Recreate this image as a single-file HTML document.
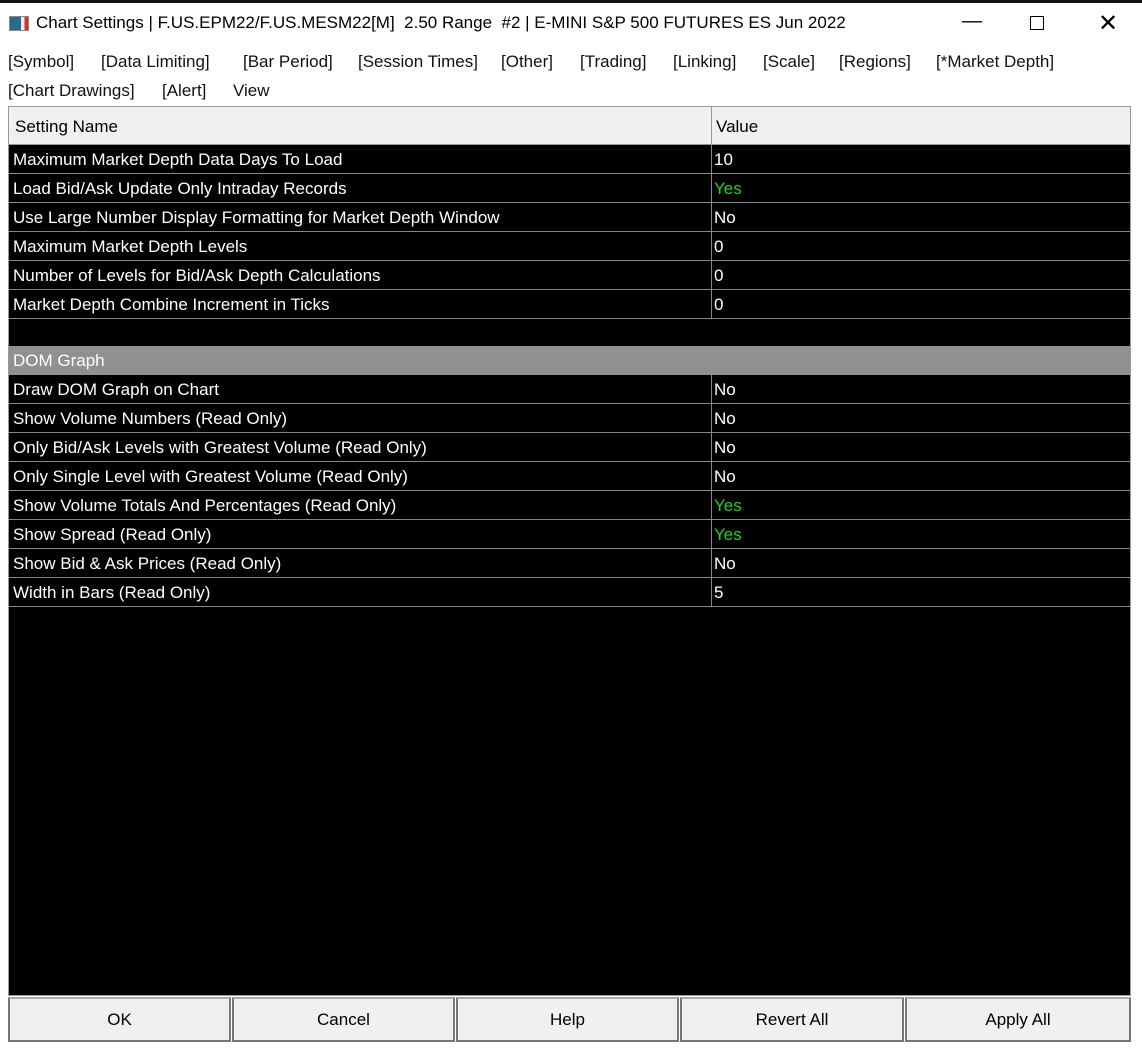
<!DOCTYPE html>
<html><head><meta charset="utf-8"><style>
*{margin:0;padding:0;box-sizing:border-box}
body{width:1142px;height:1048px;background:#fff;font-family:"Liberation Sans",sans-serif;position:relative;overflow:hidden;color:#000}
.top{position:absolute;left:0;top:0;width:1142px;height:3px;background:#111}
.title{position:absolute;left:36px;top:13px;font-size:17px}
.ico{position:absolute;left:9px;top:16px;width:20px;height:15px;border:1px solid #888;background:linear-gradient(90deg,#2a6a8a 0 60%,#eee 60% 80%,#c33 80%)}
.ctl{position:absolute;top:10px;font-size:20px}
.m{position:absolute;font-size:17px;color:#111;white-space:pre}
.tbl{position:absolute;left:8px;top:106px;width:1123px;height:890px;background:#000;border:1px solid #999}
.hdr{position:absolute;left:0;top:0;width:100%;height:38px;background:#f0f0f0;border-bottom:1px solid #999;font-size:17px}
.hdr span{position:absolute;top:10px}
.row{position:absolute;left:0;width:100%;height:29px;border-bottom:1px solid #888;color:#fff;font-size:17px}
.row span{position:absolute;top:5px;left:4px;white-space:nowrap}
.row span.v{left:705px}
.row:before{content:"";position:absolute;left:702px;top:0;height:29px;border-left:1px solid #888}
.g{color:#1ed41e}
.sec{position:absolute;left:0;width:100%;height:29px;background:#909090;color:#fff;font-size:17px}
.sec span{position:absolute;left:4px;top:5px}
.btn{position:absolute;top:997px;height:45px;background:#f0f0f0;border:2px solid #777;border-top-color:#aaa;font-size:17px;text-align:center;line-height:42px}
</style></head><body>
<div class="top"></div>
<div class="ico"></div>
<div class="title">Chart Settings | F.US.EPM22/F.US.MESM22[M]&nbsp; 2.50 Range&nbsp; #2 | E-MINI S&amp;P 500 FUTURES ES Jun 2022</div>
<div class="ctl" style="left:962px;">&#8212;</div>
<div style="position:absolute;left:1030px;top:16px;width:14px;height:14px;border:1.5px solid #000"></div>
<div class="ctl" style="left:1098px;top:9px;font-size:24px">&#10005;</div>
<div class="m" style="top:52px;left:8px">[Symbol]</div>
<div class="m" style="top:52px;left:101px">[Data Limiting]</div>
<div class="m" style="top:52px;left:243px">[Bar Period]</div>
<div class="m" style="top:52px;left:358px">[Session Times]</div>
<div class="m" style="top:52px;left:501px">[Other]</div>
<div class="m" style="top:52px;left:580px">[Trading]</div>
<div class="m" style="top:52px;left:673px">[Linking]</div>
<div class="m" style="top:52px;left:763px">[Scale]</div>
<div class="m" style="top:52px;left:839px">[Regions]</div>
<div class="m" style="top:52px;left:936px">[*Market Depth]</div>
<div class="m" style="top:81px;left:8px">[Chart Drawings]</div>
<div class="m" style="top:81px;left:162px">[Alert]</div>
<div class="m" style="top:81px;left:233px">View</div>
<div class="tbl">
<div class="hdr"><span style="left:6px">Setting Name</span><span style="left:707px">Value</span><div style="position:absolute;left:702px;top:0;height:38px;border-left:1px solid #999"></div></div>
<div class="row" style="top:38px"><span>Maximum Market Depth Data Days To Load</span><span class="v">10</span></div>
<div class="row" style="top:67px"><span>Load Bid/Ask Update Only Intraday Records</span><span class="v g">Yes</span></div>
<div class="row" style="top:96px"><span>Use Large Number Display Formatting for Market Depth Window</span><span class="v">No</span></div>
<div class="row" style="top:125px"><span>Maximum Market Depth Levels</span><span class="v">0</span></div>
<div class="row" style="top:154px"><span>Number of Levels for Bid/Ask Depth Calculations</span><span class="v">0</span></div>
<div class="row" style="top:183px"><span>Market Depth Combine Increment in Ticks</span><span class="v">0</span></div>
<div class="sec" style="top:239px"><span>DOM Graph</span></div>
<div class="row" style="top:268px"><span>Draw DOM Graph on Chart</span><span class="v">No</span></div>
<div class="row" style="top:297px"><span>Show Volume Numbers (Read Only)</span><span class="v">No</span></div>
<div class="row" style="top:326px"><span>Only Bid/Ask Levels with Greatest Volume (Read Only)</span><span class="v">No</span></div>
<div class="row" style="top:355px"><span>Only Single Level with Greatest Volume (Read Only)</span><span class="v">No</span></div>
<div class="row" style="top:384px"><span>Show Volume Totals And Percentages (Read Only)</span><span class="v g">Yes</span></div>
<div class="row" style="top:413px"><span>Show Spread (Read Only)</span><span class="v g">Yes</span></div>
<div class="row" style="top:442px"><span>Show Bid &amp; Ask Prices (Read Only)</span><span class="v">No</span></div>
<div class="row" style="top:471px"><span>Width in Bars (Read Only)</span><span class="v">5</span></div>
</div>
<div class="btn" style="left:8px;width:223px">OK</div>
<div class="btn" style="left:232px;width:223px">Cancel</div>
<div class="btn" style="left:456px;width:223px">Help</div>
<div class="btn" style="left:680px;width:224px">Revert All</div>
<div class="btn" style="left:905px;width:226px">Apply All</div>
</body></html>
